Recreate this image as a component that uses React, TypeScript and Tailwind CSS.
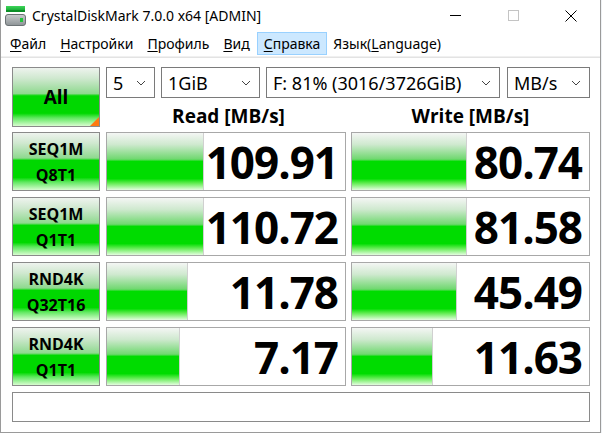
import React from "react";

const UI = { fontFamily: '"Noto Sans", "Open Sans", sans-serif' };
const BOLD = { fontFamily: '"Open Sans", "Noto Sans", sans-serif' };

// glossy green used by the test buttons and result bars
const btnGloss =
  "linear-gradient(to bottom, #eef3ee 0%, #cfe8cf 18%, #8fd98f 44%, #00d800 48%, #00d800 78%, #5fe85f 86%, #d8fcd0 100%)";
const barGloss =
  "linear-gradient(to bottom, #f4f6f4 0%, #cfe9cf 20%, #6fd86f 46%, #00dc00 50%, #00dc00 80%, #60ec50 88%, #e4fde0 100%)";

function AppIcon() {
  return (
    <svg width="22" height="22" viewBox="0 0 22 22">
      <defs>
        <linearGradient id="lid" x1="0" y1="0" x2="0" y2="1">
          <stop offset="0" stopColor="#3fd65a" />
          <stop offset="1" stopColor="#0a9a2a" />
        </linearGradient>
        <linearGradient id="body" x1="0" y1="0" x2="0" y2="1">
          <stop offset="0" stopColor="#c9ccce" />
          <stop offset="1" stopColor="#8d9396" />
        </linearGradient>
      </defs>
      <rect x="1" y="1" width="19" height="6" fill="url(#lid)" />
      <rect x="1" y="5" width="19" height="2" fill="#0c8f28" />
      <rect x="0.5" y="9.5" width="20" height="11" rx="2.5" fill="url(#body)" stroke="#6c7275" />
      <rect x="15" y="13" width="3" height="4" fill="#22c33c" />
    </svg>
  );
}

function Chevron() {
  return (
    <svg width="10" height="6" viewBox="0 0 10 6" className="shrink-0">
      <path d="M1 1 L5 5 L9 1" fill="none" stroke="#444" strokeWidth="1" />
    </svg>
  );
}

function Select({ w, label }: { w: string; label: string }) {
  return (
    <div
      className={`${w} h-[31px] flex items-center justify-between border border-[#7a7a7a] bg-white pl-[6px] pr-[8px] text-[18px] text-black`}
      style={UI}
    >
      <span className="whitespace-nowrap leading-none">{label}</span>
      <Chevron />
    </div>
  );
}

function TestButton({ top, bottom }: { top: string; bottom: string }) {
  return (
    <div
      className="w-[88px] h-[59px] border border-[#8a8a8a] flex flex-col items-center justify-center gap-[10px] text-[16px] font-bold text-black leading-none"
      style={{ ...BOLD, background: btnGloss }}
    >
      <span>{top}</span>
      <span>{bottom}</span>
    </div>
  );
}

function Result({ w, value, fill }: { w: string; value: string; fill: number }) {
  return (
    <div className={`${w} h-[59px] border border-[#a8a8a8] bg-white relative flex items-center justify-end pr-[7px]`}>
      <div
        className="absolute left-0 top-0 bottom-0 border-r border-[#d0d0d0]"
        style={{ width: fill, background: barGloss }}
      />
      <span
        className="relative text-[44px] font-bold text-black leading-none tracking-[-1px]"
        style={BOLD}
      >
        {value}
      </span>
    </div>
  );
}

const rows = [
  { top: "SEQ1M", bottom: "Q8T1", read: "109.91", rf: 97, write: "80.74", wf: 115 },
  { top: "SEQ1M", bottom: "Q1T1", read: "110.72", rf: 97, write: "81.58", wf: 115 },
  { top: "RND4K", bottom: "Q32T16", read: "11.78", rf: 81, write: "45.49", wf: 105 },
  { top: "RND4K", bottom: "Q1T1", read: "7.17", rf: 73, write: "11.63", wf: 81 },
];

function MenuItem({ hot, rest, active }: { hot: string; rest: string; active?: boolean }) {
  return (
    <div
      className={`h-[23px] flex items-center px-[6px] border ${
        active ? "bg-[#cce8ff] border-[#99d1ff]" : "border-transparent"
      }`}
    >
      <span className="underline underline-offset-[2px] decoration-1">{hot}</span>
      <span>{rest}</span>
    </div>
  );
}

export default function App() {
  return (
    <div className="w-[602px] h-[433px] bg-[#eef1f4] overflow-hidden">
      <div className="w-[601px] h-[433px] bg-white border-l border-r border-b border-[#9a9a9a] flex flex-col">
        {/* title bar */}
        <div className="h-[31px] flex items-center text-[14px] text-black" style={UI}>
          <div className="pl-[4px] pr-[5px] pt-[1px]">
            <AppIcon />
          </div>
          <span className="whitespace-nowrap">CrystalDiskMark 7.0.0 x64 [ADMIN]</span>
          <div className="ml-auto flex items-center h-full">
            <div className="w-[58px] h-full flex items-center justify-center">
              <div className="w-[11px] h-px bg-black" />
            </div>
            <div className="w-[58px] h-full flex items-center justify-center">
              <div className="w-[11px] h-[11px] border border-[#c4c4c4]" />
            </div>
            <div className="w-[58px] h-full flex items-center justify-center">
              <svg width="12" height="12" viewBox="0 0 12 12">
                <path d="M0.5 0.5 L11.5 11.5 M11.5 0.5 L0.5 11.5" stroke="#000" strokeWidth="1" />
              </svg>
            </div>
          </div>
        </div>

        {/* menu bar */}
        <div
          className="h-[26px] flex items-center pl-[2px] text-[14px] text-black border-b border-[#f0f0f0]"
          style={UI}
        >
          <MenuItem hot="Ф" rest="айл" />
          <MenuItem hot="Н" rest="астройки" />
          <MenuItem hot="П" rest="рофиль" />
          <MenuItem hot="В" rest="ид" />
          <MenuItem hot="С" rest="правка" active />
          <div className="h-[23px] flex items-center px-[6px]">
            <span>Язык(</span>
            <span className="underline underline-offset-[2px] decoration-1">L</span>
            <span>anguage)</span>
          </div>
        </div>
        <div className="h-px bg-[#e3e3e3]" />

        {/* client area */}
        <div className="pl-[11px] pt-[9px] flex flex-col">
          <div className="flex gap-[6px]">
            <div
              className="w-[88px] h-[60px] border border-[#8a8a8a] relative flex items-center justify-center text-[19px] font-bold text-black"
              style={{ ...BOLD, background: btnGloss }}
            >
              All
              <div className="absolute right-0 bottom-0 w-0 h-0 border-l-[9px] border-l-transparent border-b-[9px] border-b-[#ff7a10]" />
            </div>
            <div className="flex flex-col">
              <div className="flex">
                <Select w="w-[49px]" label="5" />
                <div className="w-[6px]" />
                <Select w="w-[99px]" label="1GiB" />
                <div className="w-[6px]" />
                <Select w="w-[234px]" label="F: 81% (3016/3726GiB)" />
                <div className="w-[7px]" />
                <Select w="w-[83px]" label="MB/s" />
              </div>
              <div className="flex h-[29px] items-end pb-[1px] text-[19px] font-bold text-black" style={BOLD}>
                <div className="w-[245px] text-center leading-none">Read [MB/s]</div>
                <div className="w-[239px] text-center leading-none">Write [MB/s]</div>
              </div>
            </div>
          </div>

          <div className="flex flex-col gap-[6px] mt-[5px]">
            {rows.map((r) => (
              <div key={r.top + r.bottom} className="flex gap-[6px]">
                <TestButton top={r.top} bottom={r.bottom} />
                <div className="flex gap-[5px]">
                  <Result w="w-[240px]" value={r.read} fill={r.rf} />
                  <Result w="w-[239px]" value={r.write} fill={r.wf} />
                </div>
              </div>
            ))}
          </div>

          <div className="w-[578px] h-[30px] border border-[#8a8a8a] bg-white mt-[6px]" />
        </div>
      </div>
    </div>
  );
}
